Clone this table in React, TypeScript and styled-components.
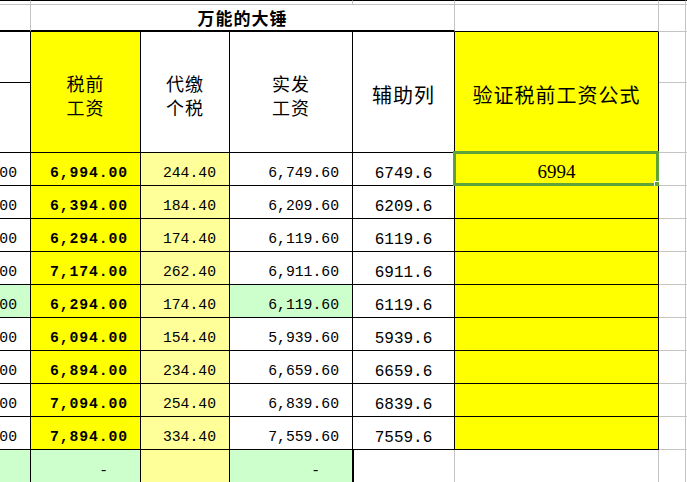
import React from "react";
import styled, { createGlobalStyle } from "styled-components";

const GlobalStyle = createGlobalStyle`
  html, body { margin: 0; padding: 0; background: #ffffff; overflow: hidden; }
  #root { width: 687px; height: 482px; overflow: hidden; }
`;

const BL = "1px solid #000000";
const GR = "1px solid #c4c4c4";
const TH = "2px solid #000000";

const YELLOW = "#ffff00";
const LIGHT_YELLOW = "#ffff99";
const GREEN = "#ccffcc";

const Sheet = styled.div`
  display: grid;
  grid-template-columns: 31px 110px 89px 123px 102px 204px 27px 1fr;
  grid-template-rows: 5px 27px 51px 70px repeat(10, 33px);
  width: 687px;
  background: #ffffff;
`;

type CellProps = {
  $bg?: string;
  $r?: string;
  $b?: string;
  $t?: string;
  $l?: string;
  $span?: number;
  $rows?: number;
  $justify?: string;
  $align?: string;
  $pb?: number;
  $pt?: number;
  $pr?: number;
};

const Cell = styled.div<CellProps>`
  position: relative;
  box-sizing: border-box;
  min-width: 0;
  display: flex;
  overflow: visible;
  background: ${(p) => p.$bg || "#ffffff"};
  border-right: ${(p) => p.$r || "none"};
  border-bottom: ${(p) => p.$b || "none"};
  border-top: ${(p) => p.$t || "none"};
  border-left: ${(p) => p.$l || "none"};
  grid-column: span ${(p) => p.$span || 1};
  grid-row: span ${(p) => p.$rows || 1};
  justify-content: ${(p) => p.$justify || "flex-start"};
  align-items: ${(p) => p.$align || "center"};
  padding-bottom: ${(p) => p.$pb || 0}px;
  padding-top: ${(p) => p.$pt || 0}px;
  padding-right: ${(p) => p.$pr || 0}px;
`;

const Clip = styled.div`
  flex: 1;
  display: flex;
  justify-content: flex-end;
  align-items: flex-end;
  overflow: hidden;
  height: 100%;
  padding-bottom: 4px;
  box-sizing: border-box;
  padding-right: 13px;
`;

const Title = styled.span`
  font-family: "Noto Sans CJK SC", "Noto Sans", sans-serif;
  font-weight: 700;
  font-size: 17px;
  letter-spacing: 1px;
  line-height: 20px;
  color: #000;
  white-space: nowrap;
`;

const HeadText = styled.span<{ $size: number }>`
  font-family: "Noto Sans CJK SC", "Noto Sans", sans-serif;
  font-weight: 400;
  font-size: ${(p) => p.$size}px;
  letter-spacing: 1px;
  line-height: 24px;
  text-align: center;
  color: #000;
  white-space: nowrap;
`;

const Amount = styled.span<{ $bold?: boolean }>`
  font-family: "Liberation Mono", "DejaVu Sans Mono", monospace;
  font-size: 14.75px;
  line-height: 16px;
  font-weight: ${(p) => (p.$bold ? 700 : 400)};
  letter-spacing: ${(p) => (p.$bold ? "0.9px" : "0")};
  margin-right: ${(p) => (p.$bold ? "-0.9px" : "0")};
  color: #000;
  white-space: nowrap;
`;

const Helper = styled.span`
  font-family: "Liberation Mono", "DejaVu Sans Mono", monospace;
  font-size: 16px;
  line-height: 18px;
  color: #000;
  white-space: nowrap;
`;

const Check = styled.span`
  font-family: "Liberation Serif", "DejaVu Serif", serif;
  font-size: 19px;
  line-height: 20px;
  color: #000;
`;

const Selection = styled.div`
  position: absolute;
  left: -2px;
  top: -2px;
  width: 206px;
  height: 35px;
  box-sizing: border-box;
  border: 3px solid #5fa33b;
  pointer-events: none;
`;

const Handle = styled.div`
  position: absolute;
  left: 198px;
  top: 27px;
  width: 5px;
  height: 5px;
  background: #5fa33b;
  border: 1px solid #ffffff;
`;

type Row = {
  a: string;
  pre: string;
  tax: string;
  net: string;
  helper: string;
  check?: string;
  green?: boolean;
};

const rows: Row[] = [
  { a: "7,000.00", pre: "6,994.00", tax: "244.40", net: "6,749.60", helper: "6749.6", check: "6994" },
  { a: "6,400.00", pre: "6,394.00", tax: "184.40", net: "6,209.60", helper: "6209.6" },
  { a: "6,300.00", pre: "6,294.00", tax: "174.40", net: "6,119.60", helper: "6119.6" },
  { a: "7,200.00", pre: "7,174.00", tax: "262.40", net: "6,911.60", helper: "6911.6" },
  { a: "6,300.00", pre: "6,294.00", tax: "174.40", net: "6,119.60", helper: "6119.6", green: true },
  { a: "6,100.00", pre: "6,094.00", tax: "154.40", net: "5,939.60", helper: "5939.6" },
  { a: "6,900.00", pre: "6,894.00", tax: "234.40", net: "6,659.60", helper: "6659.6" },
  { a: "7,100.00", pre: "7,094.00", tax: "254.40", net: "6,839.60", helper: "6839.6" },
  { a: "7,900.00", pre: "7,894.00", tax: "334.40", net: "7,559.60", helper: "7559.6" },
];

export default function App() {
  return (
    <>
      <GlobalStyle />
      <Sheet>
        {/* sliver of the row above */}
        <Cell $t={BL} $b={GR} $r={GR} />
        <Cell $t={BL} $b={GR} $r={GR} $span={3} />
        <Cell $t={BL} $b={GR} $r={GR} />
        <Cell $t={BL} $b={GR} $r={GR} />
        <Cell $t={BL} $b={GR} $r={GR} />
        <Cell $t={BL} $b={GR} />

        {/* title row */}
        <Cell $r={GR} $b={TH} />
        <Cell $r={GR} $b={TH} $span={4} $justify="center">
          <Title>万能的大锤</Title>
        </Cell>
        <Cell $r={GR} $b={BL} />
        <Cell $r={GR} $b={GR} />
        <Cell $b={GR} />

        {/* header rows */}
        <Cell $r={BL} $b={BL} />
        <Cell $bg={YELLOW} $r={BL} $b={BL} $rows={2} $justify="center" $pt={6}>
          <HeadText $size={18}>
            税前
            <br />
            工资
          </HeadText>
        </Cell>
        <Cell $r={BL} $b={BL} $rows={2} $justify="center" $pt={6}>
          <HeadText $size={18}>
            代缴
            <br />
            个税
          </HeadText>
        </Cell>
        <Cell $r={BL} $b={BL} $rows={2} $justify="center" $pt={6}>
          <HeadText $size={18}>
            实发
            <br />
            工资
          </HeadText>
        </Cell>
        <Cell $r={BL} $b={BL} $rows={2} $justify="center" $pt={6}>
          <HeadText $size={20}>辅助列</HeadText>
        </Cell>
        <Cell $bg={YELLOW} $r={BL} $b={BL} $rows={2} $justify="center" $pt={6}>
          <HeadText $size={20}>验证税前工资公式</HeadText>
        </Cell>
        <Cell $r={GR} $b={GR} />
        <Cell $b={GR} />
        <Cell $r={BL} $b={BL} />
        <Cell $r={GR} $b={GR} />
        <Cell $b={GR} />

        {/* data rows */}
        {rows.map((r, i) => (
          <React.Fragment key={i}>
            <Cell $bg={r.green ? GREEN : "#ffffff"} $r={BL} $b={BL}>
              <Clip>
                <Amount>{r.a}</Amount>
              </Clip>
            </Cell>
            <Cell $bg={YELLOW} $r={BL} $b={BL} $justify="flex-end" $align="flex-end" $pb={4} $pr={13}>
              <Amount $bold>{r.pre}</Amount>
            </Cell>
            <Cell $bg={LIGHT_YELLOW} $r={BL} $b={BL} $justify="flex-end" $align="flex-end" $pb={4} $pr={13}>
              <Amount>{r.tax}</Amount>
            </Cell>
            <Cell $bg={r.green ? GREEN : "#ffffff"} $r={BL} $b={BL} $justify="flex-end" $align="flex-end" $pb={4} $pr={13}>
              <Amount>{r.net}</Amount>
            </Cell>
            <Cell $r={BL} $b={BL} $justify="center" $align="flex-end" $pb={2}>
              <Helper>{r.helper}</Helper>
            </Cell>
            <Cell $bg={YELLOW} $r={BL} $b={BL} $justify="center" $align="flex-end" $pb={3}>
              {r.check && <Check>{r.check}</Check>}
              {i === 0 && (
                <Selection>
                  <Handle />
                </Selection>
              )}
            </Cell>
            <Cell $r={GR} $b={GR} />
            <Cell $b={GR} />
          </React.Fragment>
        ))}

        {/* totals row */}
        <Cell $bg={GREEN} $r={BL} />
        <Cell $bg={GREEN} $r={BL} $justify="flex-end" $align="flex-end" $pb={4} $pr={32}>
          <Amount>-</Amount>
        </Cell>
        <Cell $bg={LIGHT_YELLOW} $r={BL} />
        <Cell $bg={GREEN} $r={BL} $justify="flex-end" $align="flex-end" $pb={4} $pr={32}>
          <Amount>-</Amount>
        </Cell>
        <Cell $l={BL} $r={GR} />
        <Cell $r={GR} />
        <Cell $r={GR} />
        <Cell />
      </Sheet>
    </>
  );
}
